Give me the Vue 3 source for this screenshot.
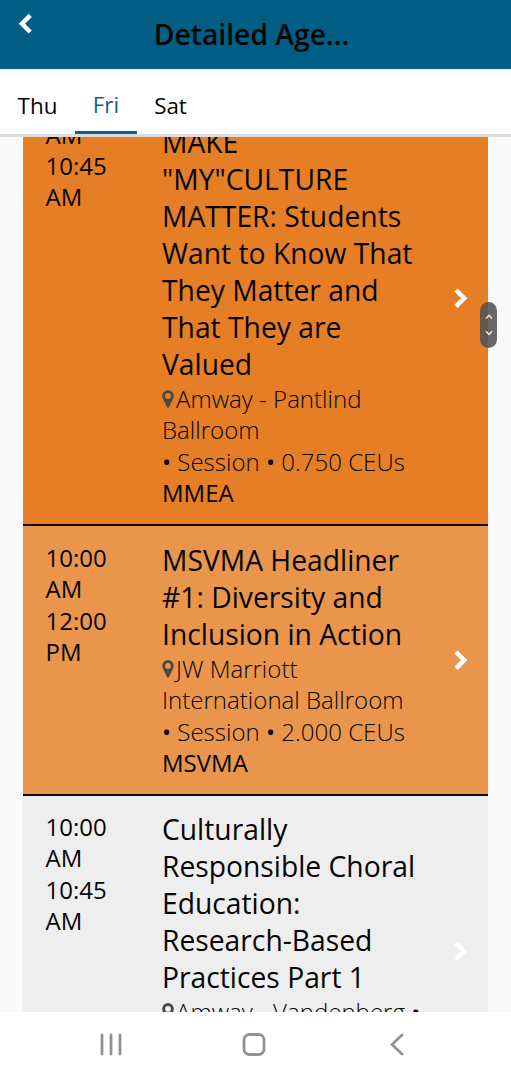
<script setup>
const days = [
  { label: 'Thu', active: false },
  { label: 'Fri', active: true },
  { label: 'Sat', active: false }
]
const sessions = [
  {
    tone: 'strong',
    times: ['AM', '10:45', 'AM'],
    title: ['MAKE', '"MY"CULTURE', 'MATTER: Students', 'Want to Know That', 'They Matter and', 'That They are', 'Valued'],
    place: ['Amway - Pantlind', 'Ballroom'],
    kind: ['Session', '0.750 CEUs'],
    org: 'MMEA'
  },
  {
    tone: 'soft',
    times: ['10:00', 'AM', '12:00', 'PM'],
    title: ['MSVMA Headliner', '#1: Diversity and', 'Inclusion in Action'],
    place: ['JW Marriott', 'International Ballroom'],
    kind: ['Session', '2.000 CEUs'],
    org: 'MSVMA'
  },
  {
    tone: 'plain',
    times: ['10:00', 'AM', '10:45', 'AM'],
    title: ['Culturally', 'Responsible Choral', 'Education:', 'Research-Based', 'Practices Part 1'],
    place: ['Amway - Vandenberg'],
    more: true
  }
]
</script>

<template>
  <div class="screen">
    <header class="bar">
      <svg class="back" width="16" height="22" viewBox="0 0 16 22"><path d="M13.2 2.400 5 10.800l8.200 8.200" /></svg>
      <h1>Detailed Age...</h1>
    </header>
    <nav class="tabs">
      <div v-for="d in days" :key="d.label" class="tab" :class="{ active: d.active }"><span>{{ d.label }}</span></div>
    </nav>
    <main class="list">
      <article v-for="(s, i) in sessions" :key="i" class="card" :class="s.tone">
        <div class="times"><div v-for="(t, k) in s.times" :key="k"><span>{{ t }}</span></div></div>
        <div class="info">
          <h2><span v-for="t in s.title" :key="t">{{ t }}</span></h2>
          <div v-for="(p, k) in s.place" :key="p" class="meta">
            <svg v-if="k === 0" class="pin" width="12" height="18" viewBox="0 0 12 18"><path fill-rule="evenodd" d="M6 0a5.800 5.800 0 0 0-5.800 5.800c0 1.400.4 2.400 1 3.500L5 17.100c.4.9 1.600.9 2 0l3.800-7.800c.6-1.100 1-2.100 1-3.500A5.800 5.800 0 0 0 6 0Zm0 3a2.900 2.900 0 1 1 0 5.800a2.900 2.900 0 0 1 0-5.800Z" /></svg><span>{{ p }}<b v-if="s.more"> •</b></span>
          </div>
          <div v-if="s.kind" class="meta kind"><span><b>•</b> {{ s.kind[0] }} <b>•</b> {{ s.kind[1] }}</span></div>
          <div v-if="s.org" class="org"><span>{{ s.org }}</span></div>
        </div>
        <svg class="go" width="16" height="22" viewBox="0 0 16 22"><path d="M3 3l8.200 8.200L3 19.400" /></svg>
      </article>
      <div class="scroller">
        <svg width="17" height="46" viewBox="0 0 17 46"><path d="M6 16.500l3-3.200 3 3.200M6 29.300l3 3.200 3-3.200" /></svg>
      </div>
    </main>
    <footer class="system">
      <svg width="22" height="24" viewBox="0 0 22 24"><path d="M2 3v19M11 3v19M20 3v19" /></svg>
      <svg width="26" height="26" viewBox="0 0 26 26"><rect x="3" y="2.500" width="20" height="20" rx="5.500" /></svg>
      <svg width="16" height="24" viewBox="0 0 16 24"><path d="M13 3 3 12.500l10 9.500" /></svg>
    </footer>
  </div>
</template>

<style>
body { background: #fff; }
</style>

<style scoped>
.screen {
  width: 511px; height: 1080px; overflow: hidden; display: flex; flex-direction: column;
  font-family: "Open Sans", "Noto Sans", sans-serif; color: #050505; background: #fff;
}
.bar { position: relative; height: 69px; flex: none; background: #005e85; display: flex; justify-content: center; }
.bar h1 { margin: 0 8px 0 0; font-size: 28.300px; line-height: 69px; font-weight: 600; white-space: nowrap; }
.back { position: absolute; left: 17px; top: 13px; fill: none; stroke: #fff; stroke-width: 4.500; }
.tabs { height: 65px; flex: none; border-bottom: 3px solid #dcdcdc; display: flex; font-size: 22.400px; }
.tab { box-sizing: border-box; height: 65px; line-height: 73px; text-align: center; width: 75px; }
.tab.active { width: 62px; color: #135f82; border-bottom: 3px solid #135f82; line-height: 71px; }
.tab:last-child { width: 67px; }
.list { position: relative; flex: 1; overflow: hidden; background: #f9f9f9; padding: 0 23px; }
.card {
  box-sizing: border-box; height: 270px; padding: 15.800px 19px 0 22.500px; border-bottom: 2px solid #150a08;
  display: flex; white-space: nowrap;
}
.strong { height: 456px; margin-top: -67px; padding-top: 54px; background: #e67e25; }
.soft { background: #ea954c; }
.plain { height: 310px; padding-top: 15px; background: #eee; }
.times { width: 116.500px; flex: none; font-size: 24px; line-height: 31.400px; }
.strong .times { margin-top: -5.500px; }
.info { flex: 1; min-width: 0; }
h2 { margin: 0; font-size: 28.250px; line-height: 37px; font-weight: 400; }
h2 span { display: block; }
.meta { height: 31.400px; line-height: 31.400px; font-size: 24.060px; font-weight: 300; }
.meta b { font-weight: 500; }
.org { font-size: 24px; line-height: 31.400px; }
.pin { fill: #4b4a42; margin-right: 2px; vertical-align: 0; }
.go { align-self: center; flex: none; margin-top: -16px; fill: none; stroke: #fff; stroke-width: 4.500; }
.strong .go { margin-top: -53px; }
.plain .go { margin-top: -13px; }
.scroller { position: absolute; left: 480px; top: 165px; width: 17px; height: 46px; border-radius: 9px; background: rgba(82, 82, 82, .88); }
.scroller svg { display: block; fill: none; stroke: #eee; stroke-width: 1.300; }
.system { height: 68px; flex: none; display: flex; align-items: flex-start; padding: 20px 106px 0 100px; box-sizing: border-box; justify-content: space-between; }
.system svg { fill: none; stroke: #929292; stroke-width: 2.800; stroke-linecap: round; }
.system svg:nth-child(2) { margin-right: 3px; }
</style>
